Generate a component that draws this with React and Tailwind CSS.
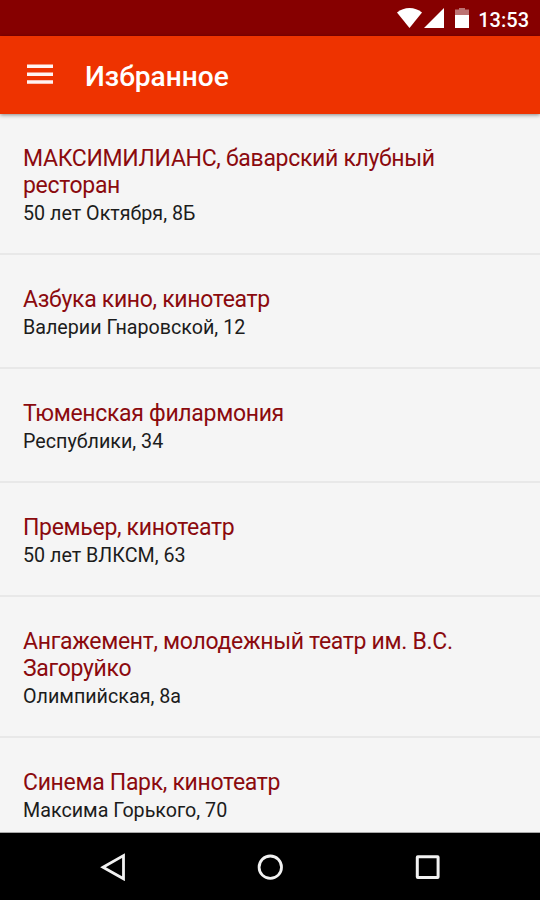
import React from 'react';

const places = [
  { name: 'МАКСИМИЛИАНС, баварский клубный ресторан', address: '50 лет Октября, 8Б' },
  { name: 'Азбука кино, кинотеатр', address: 'Валерии Гнаровской, 12' },
  { name: 'Тюменская филармония', address: 'Республики, 34' },
  { name: 'Премьер, кинотеатр', address: '50 лет ВЛКСМ, 63' },
  { name: 'Ангажемент, молодежный театр им. В.С. Загоруйко', address: 'Олимпийская, 8а' },
  { name: 'Синема Парк, кинотеатр', address: 'Максима Горького, 70' },
];

function StatusBar() {
  return (
    <div className="flex h-9 shrink-0 items-center justify-end bg-[#860000] pr-[11px] text-white">
      <svg className="mr-[2px] h-[20px] w-[25px]" viewBox="0 0 25 20" fill="currentColor">
        <path d="M12.5 20 0 4.500C3.500 1.500 8 0 12.500 0S21.500 1.500 25 4.500z" />
      </svg>
      <svg className="mr-[11px] h-[20px] w-[20px]" viewBox="0 0 20 20" fill="currentColor">
        <path d="M0 20 20 0v20z" />
      </svg>
      <svg className="mr-[9px] h-[20px] w-[14px]" viewBox="0 0 14 20" fill="currentColor">
        <path d="M4 0h6v1.500h4V7H0V1.500h4z" opacity="0.45" />
        <path d="M0 7h14v13H0z" />
      </svg>
      <span className="pt-[3px] text-[20px] font-medium">13:53</span>
    </div>
  );
}

function Toolbar() {
  return (
    <header className="z-10 flex h-[78px] shrink-0 items-center bg-[#ee3300] pl-[27px] text-white shadow-[0_1px_4px_rgba(0,0,0,0.45)]">
      <svg className="mr-8 mb-[2px] h-[20px] w-[26px]" viewBox="0 0 26 20" fill="currentColor">
        <path d="M0 .4h26v3.500H0zM0 8.400h26v3.500H0zM0 16.200h26v3.500H0z" opacity="0.95" />
      </svg>
      <h1 className="pt-[5px] text-[28.1px] font-medium">Избранное</h1>
    </header>
  );
}

function PlaceItem({ name, address }) {
  return (
    <li className="border-b-2 border-[#e8e8e8] px-[23px] pt-[31px] pb-[26px]">
      <div className="text-[23px] leading-[27px] tracking-[-0.31px] text-[#8b0a0e]">{name}</div>
      <div className="pt-px text-[19.7px] leading-[27px] text-[#1c1c1c]">{address}</div>
    </li>
  );
}

function NavBar() {
  return (
    <nav className="flex h-[68px] shrink-0 items-center justify-between border-t border-[#a8a8a8] bg-black px-[99px] text-[#f2f2f2]">
      <svg className="size-7" viewBox="0 0 28 28" fill="none" stroke="currentColor" strokeWidth="2.800">
        <path d="M4 14.200 24.500 2.600v23.200z" />
      </svg>
      <svg className="size-7" viewBox="0 0 28 28" fill="none" stroke="currentColor" strokeWidth="2.800">
        <circle cx="14.300" cy="14.200" r="11.200" />
      </svg>
      <svg className="size-7" viewBox="0 0 28 28" fill="none" stroke="currentColor" strokeWidth="3" strokeLinejoin="round">
        <rect x="4.300" y="3.700" width="20.800" height="20.800" rx="0.500" />
      </svg>
    </nav>
  );
}

export default function App() {
  return (
    <div className="flex h-[900px] w-[540px] flex-col overflow-hidden bg-[#f5f5f5] font-[Roboto,sans-serif]">
      <StatusBar />
      <Toolbar />
      <ul className="min-h-0 flex-1 overflow-hidden">
        {places.map((place) => (
          <PlaceItem key={place.name} {...place} />
        ))}
      </ul>
      <NavBar />
    </div>
  );
}
